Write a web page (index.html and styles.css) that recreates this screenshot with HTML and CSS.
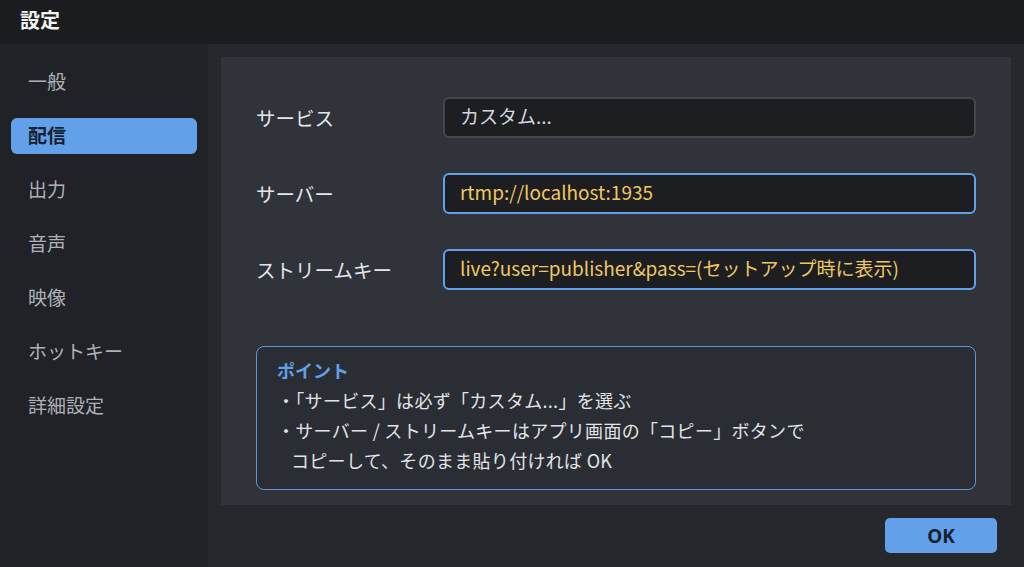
FILE: index.html
```html
<!DOCTYPE html>
<html>
<head>
	<title>設定</title>
	<link rel="stylesheet" href="styles.css">
</head>
<body>
	<div class="titlebar">設定</div>

	<div class="window">
		<ul class="nav">
			<li>一般</li>
			<li class="active">配信</li>
			<li>出力</li>
			<li>音声</li>
			<li>映像</li>
			<li>ホットキー</li>
			<li>詳細設定</li>
		</ul>

		<div class="main">
			<div class="panel">
				<div class="field">
					<label>サービス</label>
					<div class="input">カスタム...</div>
				</div>
				<div class="field">
					<label>サーバー</label>
					<div class="input focus">rtmp://localhost:1935</div>
				</div>
				<div class="field">
					<label>ストリームキー</label>
					<div class="input focus">live?user=publisher&amp;pass=(セットアップ時に表示)</div>
				</div>

				<div class="note">
					<div class="note_title">ポイント</div>
					<p>・「サービス」は必ず「カスタム...」を選ぶ</p>
					<p>・サーバー / ストリームキーはアプリ画面の「コピー」ボタンで</p>
					<p class="cont">コピーして、そのまま貼り付ければ OK</p>
				</div>
			</div>

			<div class="footer">
				<button class="ok">OK</button>
			</div>
		</div>
	</div>
</body>
</html>
```

FILE: styles.css
```css
/* Reset */

html, body, div, ul, li, p, label { margin: 0; padding: 0; }
ul { list-style: none; }

/* Layout */

body { width: 1024px; height: 567px; overflow: hidden; background: #1b1c20; font-family: "Noto Sans CJK JP", "Noto Sans", sans-serif; color: #e2e4e8; }
.titlebar { height: 44px; line-height: 40px; padding-left: 20px; font-size: 20px; font-weight: bold; color: #f2f2f2; background: #1b1c20; }
.window { display: flex; height: 523px; }

/* Sidebar */

.nav { width: 208px; box-sizing: border-box; padding: 20px 11px; background: #202227; }
.nav li { height: 36px; line-height: 33px; margin-bottom: 18px; padding-left: 17px; border-radius: 6px; font-size: 19px; color: #aeb2b8; }
.nav li.active { background: #62a0ea; color: #15202e; font-weight: bold; }

/* Main */

.main { flex: 1; display: flex; flex-direction: column; padding: 13px 13px 0; background: #26282d; }
.panel { height: 448px; box-sizing: border-box; padding: 40px 35px 0; background: #30333a; }
.field { display: flex; align-items: center; height: 41px; margin-bottom: 35px; }
.field label { width: 187px; font-size: 19.5px; line-height: 34px; color: #e4e6ea; }
.input { flex: 1; height: 41px; box-sizing: border-box; padding-left: 15px; line-height: 34px; border: 2px solid #44474e; border-radius: 6px; background: #1c1e22; font-size: 19px; color: #d4d6da; }
.input.focus { border-color: #62a0ea; color: #f0c860; }

/* Note */

.note { margin-top: 56px; padding: 8px 20px 14px; border: 1px solid #5b97dc; border-radius: 8px; background: #2a2d33; font-size: 18px; line-height: 30px; color: #e2e4e8; }
.note_title { font-weight: bold; color: #62a0ea; }
.note p { letter-spacing: 0.3px; }
.note .cont { padding-left: 14px; }

/* Footer */

.footer { flex: 1; display: flex; justify-content: flex-end; align-items: flex-start; padding: 13px 14px 0 0; }
.ok { width: 112px; height: 35px; border: 0; border-radius: 5px; background: #62a0ea; font-family: "Noto Sans", sans-serif; font-size: 19px; font-weight: bold; color: #15202e; }
```
